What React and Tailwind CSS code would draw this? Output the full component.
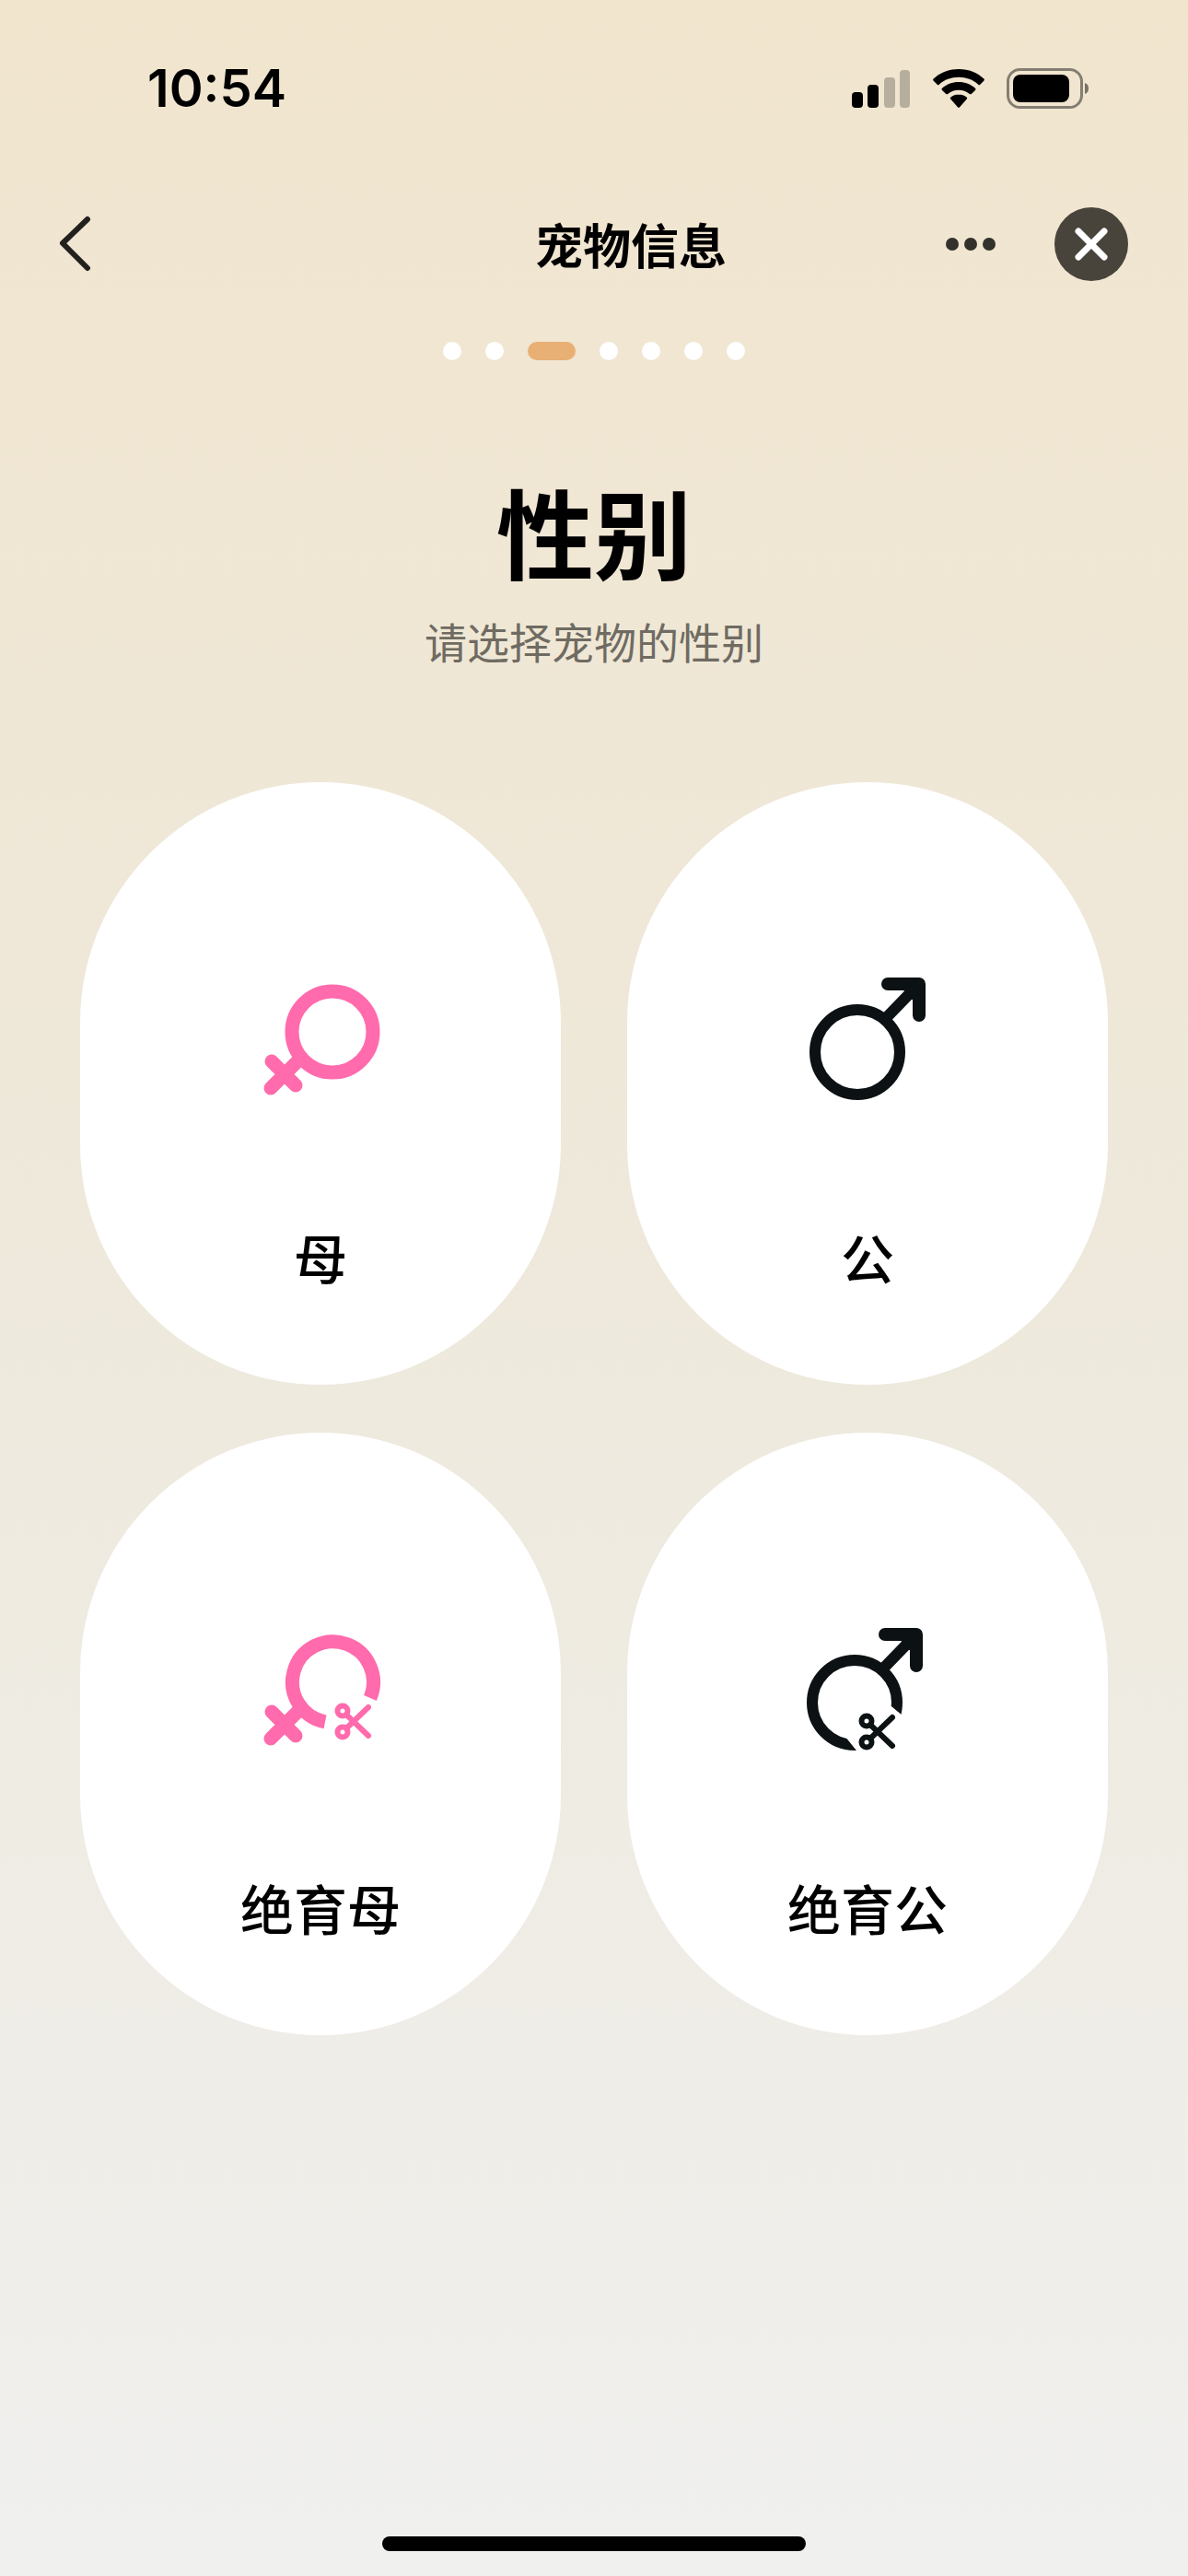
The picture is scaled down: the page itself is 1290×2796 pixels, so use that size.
import React, { useState } from "react";

const steps = [1, 2, 3, 4, 5, 6, 7];
const currentStep = 3;

function SignalIcon() {
    return (
        <svg width="64" height="42" viewBox="0 0 64 42" aria-hidden="true">
            <rect x="0" y="25" width="12" height="17" rx="4" />
            <rect x="17" y="17" width="12" height="25" rx="4" />
            <rect x="35" y="9" width="12" height="33" rx="4" fillOpacity="0.24" />
            <rect x="52" y="1" width="11" height="41" rx="4" fillOpacity="0.24" />
        </svg>
    );
}

function WifiIcon() {
    return (
        <svg width="56" height="42" viewBox="0 0 56 42" aria-hidden="true">
            <path d="M28 0C17 0 7.500 4 .700 10.500a1.500 1.500 0 0 0 0 2.200l4 4a1.500 1.500 0 0 0 2.100 0C12.500 11.500 20 8.800 28 8.800s15.500 2.700 21.200 7.900a1.500 1.500 0 0 0 2.100 0l4-4a1.500 1.500 0 0 0 0-2.200C48.500 4 39 0 28 0Z" />
            <path d="M28 14c-7 0-13.300 2.500-18 6.700a1.500 1.500 0 0 0 0 2.200l4.200 4a1.500 1.500 0 0 0 2 0c3.300-2.700 7.400-4.200 11.800-4.200s8.500 1.500 11.800 4.200a1.500 1.500 0 0 0 2 0l4.200-4a1.500 1.500 0 0 0 0-2.200C41.300 16.500 35 14 28 14Z" />
            <path d="M28 27.500c-3.300 0-6.300 1.100-8.600 3a1.500 1.500 0 0 0 0 2.200l7.500 8.500a1.500 1.500 0 0 0 2.200 0l7.500-8.500a1.500 1.500 0 0 0 0-2.200c-2.300-1.900-5.300-3-8.600-3Z" />
        </svg>
    );
}

function BatteryIcon() {
    return (
        <svg width="90" height="44" viewBox="0 0 90 44" aria-hidden="true">
            <rect x="1.500" y="1.500" width="80" height="41" rx="13" fill="none" stroke="#000" strokeOpacity="0.45" strokeWidth="3" />
            <rect x="7" y="7" width="61" height="30" rx="8" />
            <path d="M85 16c3 1 4 3 4 6s-1 5-4 6Z" fillOpacity="0.5" />
        </svg>
    );
}

function Scissors() {
    return (
        <g fill="none" stroke="currentColor" strokeWidth="6" strokeLinecap="round">
            <circle cx="6" cy="6" r="5.500" />
            <circle cx="6" cy="29" r="5.500" />
            <path d="M10 25 L34 2" />
            <path d="M10 10 L34 33" />
        </g>
    );
}

function FemaleCross() {
    return <path d="M47 100 L16 131 M17 102 L43 128" strokeWidth="15" strokeLinecap="round" />;
}

function MaleArrow() {
    return (
        <g>
            <path d="M92 18 H126 V52" strokeWidth="14" strokeLinecap="round" strokeLinejoin="round" />
            <path d="M91 54 L122 22" strokeWidth="12" />
            <path d="M108 23 L126 18 L121 37 Z" fill="currentColor" />
        </g>
    );
}

function FemaleIcon() {
    return (
        <svg width="140" height="150" viewBox="0 0 140 150" fill="none" stroke="currentColor" className="text-[#ff6bac]" aria-hidden="true">
            <circle cx="83" cy="70" r="44" strokeWidth="15" />
            <FemaleCross />
        </svg>
    );
}

function MaleIcon() {
    return (
        <svg width="140" height="150" viewBox="0 0 140 150" fill="none" stroke="currentColor" className="text-[#0c1113]" aria-hidden="true">
            <circle cx="59" cy="92" r="46" strokeWidth="12" />
            <MaleArrow />
        </svg>
    );
}

function SpayedFemaleIcon() {
    return (
        <svg width="140" height="150" viewBox="0 0 140 150" fill="none" stroke="currentColor" className="text-[#ff6bac]" aria-hidden="true">
            <path d="M75 113 A44 44 0 1 1 124 87" strokeWidth="15" />
            <FemaleCross />
            <g transform="translate(88 95)">
                <Scissors />
            </g>
        </svg>
    );
}

function NeuteredMaleIcon() {
    return (
        <svg width="140" height="150" viewBox="0 0 140 150" fill="none" stroke="currentColor" className="text-[#0c1113]" aria-hidden="true">
            <circle cx="56" cy="92" r="46" strokeWidth="12" />
            <path d="M45 128 L62 149 L106 147 L115 112 L90 91 Z" fill="#fff" stroke="none" />
            <g transform="translate(-3 0)">
                <MaleArrow />
            </g>
            <g transform="translate(63 106)">
                <Scissors />
            </g>
        </svg>
    );
}

const options = [
    { id: "female", label: "母", Icon: FemaleIcon },
    { id: "male", label: "公", Icon: MaleIcon },
    { id: "spayed-female", label: "绝育母", Icon: SpayedFemaleIcon },
    { id: "neutered-male", label: "绝育公", Icon: NeuteredMaleIcon },
];

function StatusBar() {
    return (
        <div className="flex h-48 items-center justify-between pl-40 pr-[107px]">
            <span className="font-['Inter',sans-serif] text-[56px] leading-none font-semibold">10:54</span>
            <div className="flex items-center gap-6">
                <SignalIcon />
                <WifiIcon />
                <BatteryIcon />
            </div>
        </div>
    );
}

function NavBar() {
    return (
        <header className="flex h-[146px] items-center pr-[65px] pl-[63px]">
            <button type="button" aria-label="返回">
                <svg width="36" height="62" viewBox="0 0 36 62" fill="none" stroke="#22211e" strokeWidth="6" strokeLinecap="round" strokeLinejoin="round" aria-hidden="true">
                    <path d="M32 4 L5 30 L32 57" />
                </svg>
            </button>
            <h1 className="flex-1 pl-61 text-center text-[52px] leading-none font-bold">宠物信息</h1>
            <div className="flex items-center gap-16">
                <button type="button" aria-label="更多">
                    <svg width="54" height="16" viewBox="0 0 54 16" fill="#33312c" aria-hidden="true">
                        <circle cx="7" cy="8" r="7" />
                        <circle cx="27" cy="8" r="7" />
                        <circle cx="47" cy="8" r="7" />
                    </svg>
                </button>
                <button type="button" aria-label="关闭" className="flex size-20 items-center justify-center rounded-full bg-[#48443c]">
                    <svg width="36" height="36" viewBox="0 0 36 36" fill="none" stroke="#fff" strokeWidth="7" strokeLinecap="round" aria-hidden="true">
                        <path d="M4 4 L32 32 M32 4 L4 32" />
                    </svg>
                </button>
            </div>
        </header>
    );
}

function StepDots() {
    return (
        <div className="mt-[33px] flex justify-center gap-[26px]">
            {steps.map((step) => (
                <span
                    key={step}
                    className={step === currentStep ? "h-5 w-[52px] rounded-full bg-[#e8b074]" : "size-5 rounded-full bg-white"}
                />
            ))}
        </div>
    );
}

function App() {
    const [selected, setSelected] = useState(null);

    return (
        <div className="flex min-h-screen flex-col bg-linear-to-b from-[#f1e5ce] via-[#eee9dc] to-[#f0f0ef] font-['Noto_Sans_CJK_SC',sans-serif] text-black">
            <StatusBar />
            <NavBar />
            <StepDots />
            <main className="px-[87px]">
                <h2 className="mt-[120px] text-center text-[106px] leading-[128px] font-bold">性别</h2>
                <p className="mt-6 text-center text-[46px] leading-[64px] text-[#6f6b62]">请选择宠物的性别</p>
                <div className="mt-[122px] grid grid-cols-2 gap-x-[72px] gap-y-[52px]">
                    {options.map(({ id, label, Icon }) => (
                        <button
                            key={id}
                            type="button"
                            aria-pressed={selected === id}
                            onClick={() => setSelected(id)}
                            className="flex h-[654px] flex-col items-center rounded-full bg-white pt-[201px]"
                        >
                            <Icon />
                            <span className="mt-[124px] text-[58px] leading-[80px] font-medium">{label}</span>
                        </button>
                    ))}
                </div>
            </main>
            <div className="mx-auto mt-auto mb-[27px] h-4 w-[460px] rounded-full bg-black" />
        </div>
    );
}

export default App;
